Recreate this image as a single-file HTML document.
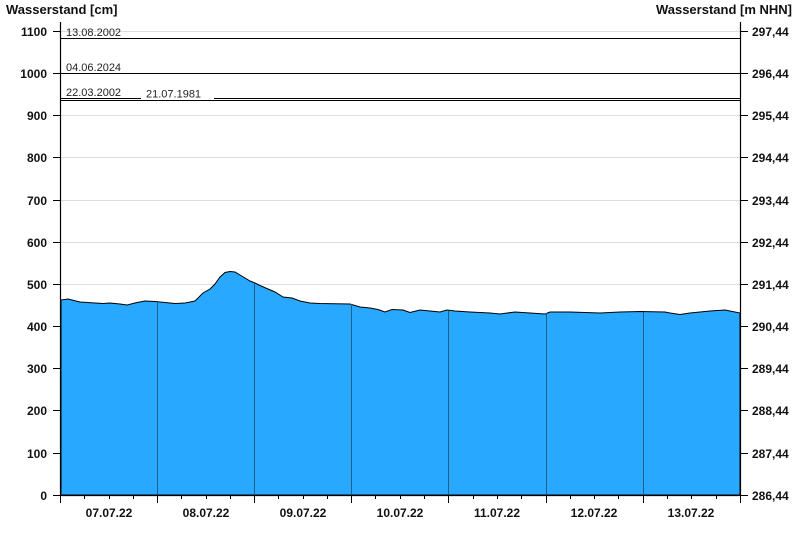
<!DOCTYPE html>
<html><head><meta charset="utf-8"><style>
html,body{margin:0;padding:0;background:#fff;}
svg{display:block;font-family:"Liberation Sans",Arial,sans-serif;}
.b{font-weight:bold;font-size:12px;fill:#111;}
.s{font-size:11px;fill:#222;}
</style></head><body>
<svg width="800" height="550" viewBox="0 0 800 550">
<text x="6" y="14" class="b" style="font-size:13px">Wasserstand [cm]</text>
<text x="792" y="14" class="b" text-anchor="end" style="font-size:13px">Wasserstand [m NHN]</text>
<g stroke="#ddd" stroke-width="1">
<line x1="61" x2="740" y1="31.5" y2="31.5"/><line x1="61" x2="740" y1="73.5" y2="73.5"/>
<line x1="61" x2="740" y1="115.5" y2="115.5"/><line x1="61" x2="740" y1="157.5" y2="157.5"/>
<line x1="61" x2="740" y1="200.5" y2="200.5"/><line x1="61" x2="740" y1="242.5" y2="242.5"/>
<line x1="61" x2="740" y1="284.5" y2="284.5"/><line x1="61" x2="740" y1="326.5" y2="326.5"/>
<line x1="61" x2="740" y1="368.5" y2="368.5"/><line x1="61" x2="740" y1="410.5" y2="410.5"/>
<line x1="61" x2="740" y1="453.5" y2="453.5"/>
</g>
<polygon fill="#29a8ff" stroke="#000" stroke-width="1" points="61,495 61,300 68,299 80,302 95,303 103,303.5 110,303 120,304 127,305 137,302.5 145,301 155,301.5 165,302.5 175,303.5 185,303 195,301 203,293 210,289 215,284 220,277 225,272.5 230,271.5 235,272 240,275 245,278 250,281 255,283 260,285.5 268,289 275,292 283,297 292,298 300,301 310,303 320,303.5 350,304 360,307 370,308 378,309.5 385,312 392,309.5 403,310 410,312.5 420,310 430,311 440,312 447,310 455,311 470,312 490,313 500,314 515,312 530,313 545,314 550,312 570,312 600,313 620,312 640,311.5 665,312 670,313 680,314.5 690,313 710,311 725,310 735,312 740,313 740,495"/>
<g stroke="#1f5f8a" stroke-width="1">
<line x1="157.5" x2="157.5" y1="302" y2="495"/><line x1="254.5" x2="254.5" y1="283" y2="495"/>
<line x1="351.5" x2="351.5" y1="304" y2="495"/><line x1="448.5" x2="448.5" y1="311" y2="495"/>
<line x1="546.5" x2="546.5" y1="313" y2="495"/><line x1="643.5" x2="643.5" y1="312" y2="495"/>
</g>
<g stroke="#000" stroke-width="1">
<line x1="61" x2="740" y1="38.5" y2="38.5"/><line x1="61" x2="740" y1="73.5" y2="73.5"/>
<line x1="61" x2="740" y1="98.5" y2="98.5"/><line x1="61" x2="740" y1="100.5" y2="100.5"/>
</g>
<rect x="141" y="90" width="73" height="9" fill="#fff"/>
<text x="66" y="36" class="s">13.08.2002</text>
<text x="66" y="71" class="s">04.06.2024</text>
<text x="66" y="96" class="s">22.03.2002</text>
<text x="146" y="97.5" class="s">21.07.1981</text>
<g stroke="#000" stroke-width="1.2">
<line x1="60.5" x2="60.5" y1="22" y2="495"/><line x1="740.5" x2="740.5" y1="22" y2="495"/>
<line x1="60" x2="741" y1="495.5" y2="495.5"/>
</g>
<g stroke="#000" stroke-width="1">
<line x1="53" x2="60" y1="31.5" y2="31.5"/><line x1="53" x2="60" y1="73.5" y2="73.5"/><line x1="53" x2="60" y1="115.5" y2="115.5"/><line x1="53" x2="60" y1="157.5" y2="157.5"/><line x1="53" x2="60" y1="200.5" y2="200.5"/><line x1="53" x2="60" y1="242.5" y2="242.5"/><line x1="53" x2="60" y1="284.5" y2="284.5"/><line x1="53" x2="60" y1="326.5" y2="326.5"/><line x1="53" x2="60" y1="368.5" y2="368.5"/><line x1="53" x2="60" y1="410.5" y2="410.5"/><line x1="53" x2="60" y1="453.5" y2="453.5"/><line x1="53" x2="60" y1="495.5" y2="495.5"/>
<line x1="741" x2="748" y1="31.5" y2="31.5"/><line x1="741" x2="748" y1="73.5" y2="73.5"/><line x1="741" x2="748" y1="115.5" y2="115.5"/><line x1="741" x2="748" y1="157.5" y2="157.5"/><line x1="741" x2="748" y1="200.5" y2="200.5"/><line x1="741" x2="748" y1="242.5" y2="242.5"/><line x1="741" x2="748" y1="284.5" y2="284.5"/><line x1="741" x2="748" y1="326.5" y2="326.5"/><line x1="741" x2="748" y1="368.5" y2="368.5"/><line x1="741" x2="748" y1="410.5" y2="410.5"/><line x1="741" x2="748" y1="453.5" y2="453.5"/><line x1="741" x2="748" y1="495.5" y2="495.5"/>
</g>
<g stroke="#000" stroke-width="1">
<line x1="60.5" x2="60.5" y1="495" y2="503"/><line x1="157.5" x2="157.5" y1="495" y2="503"/><line x1="254.5" x2="254.5" y1="495" y2="503"/><line x1="351.5" x2="351.5" y1="495" y2="503"/><line x1="448.5" x2="448.5" y1="495" y2="503"/><line x1="546.5" x2="546.5" y1="495" y2="503"/><line x1="643.5" x2="643.5" y1="495" y2="503"/><line x1="740.5" x2="740.5" y1="495" y2="503"/>
<line x1="84.5" x2="84.5" y1="495" y2="499"/><line x1="109.5" x2="109.5" y1="495" y2="499"/><line x1="133.5" x2="133.5" y1="495" y2="499"/>
<line x1="181.5" x2="181.5" y1="495" y2="499"/><line x1="206.5" x2="206.5" y1="495" y2="499"/><line x1="230.5" x2="230.5" y1="495" y2="499"/>
<line x1="278.5" x2="278.5" y1="495" y2="499"/><line x1="303.5" x2="303.5" y1="495" y2="499"/><line x1="327.5" x2="327.5" y1="495" y2="499"/>
<line x1="375.5" x2="375.5" y1="495" y2="499"/><line x1="400.5" x2="400.5" y1="495" y2="499"/><line x1="424.5" x2="424.5" y1="495" y2="499"/>
<line x1="473.5" x2="473.5" y1="495" y2="499"/><line x1="497.5" x2="497.5" y1="495" y2="499"/><line x1="521.5" x2="521.5" y1="495" y2="499"/>
<line x1="570.5" x2="570.5" y1="495" y2="499"/><line x1="594.5" x2="594.5" y1="495" y2="499"/><line x1="618.5" x2="618.5" y1="495" y2="499"/>
<line x1="667.5" x2="667.5" y1="495" y2="499"/><line x1="691.5" x2="691.5" y1="495" y2="499"/><line x1="716.5" x2="716.5" y1="495" y2="499"/>
</g>
<g class="b" text-anchor="end">
<text x="47" y="36">1100</text><text x="47" y="78">1000</text><text x="47" y="120">900</text><text x="47" y="162">800</text><text x="47" y="205">700</text><text x="47" y="247">600</text><text x="47" y="289">500</text><text x="47" y="331">400</text><text x="47" y="373">300</text><text x="47" y="415">200</text><text x="47" y="458">100</text><text x="47" y="500">0</text>
</g>
<g class="b">
<text x="752" y="36">297,44</text><text x="752" y="78">296,44</text><text x="752" y="120">295,44</text><text x="752" y="162">294,44</text><text x="752" y="205">293,44</text><text x="752" y="247">292,44</text><text x="752" y="289">291,44</text><text x="752" y="331">290,44</text><text x="752" y="373">289,44</text><text x="752" y="415">288,44</text><text x="752" y="458">287,44</text><text x="752" y="500">286,44</text>
</g>
<g class="b" text-anchor="middle">
<text x="109" y="517">07.07.22</text><text x="206" y="517">08.07.22</text><text x="303" y="517">09.07.22</text><text x="400" y="517">10.07.22</text><text x="497" y="517">11.07.22</text><text x="594" y="517">12.07.22</text><text x="691" y="517">13.07.22</text>
</g>
</svg>
</body></html>
